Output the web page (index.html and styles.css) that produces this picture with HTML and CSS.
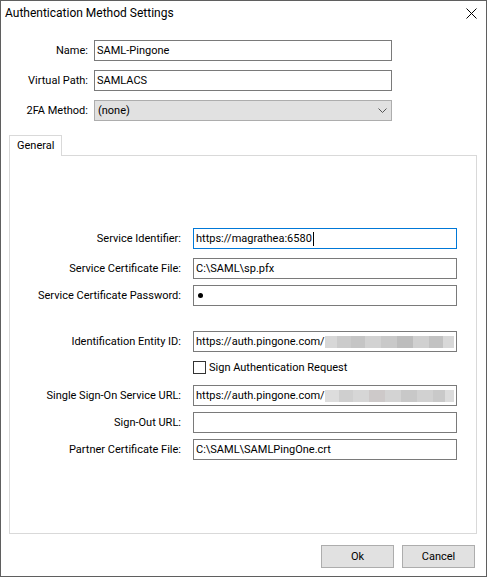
FILE: index.html
```html
<!DOCTYPE html>
<html lang="en">
<head>
    <meta charset="UTF-8">
    <meta name="viewport" content="width=device-width, initial-scale=1.0">
    <title>Authentication Method Settings</title>
    <link rel="stylesheet" href="styles.css">
</head>
<body>
    <div class="window">
        <div class="titlebar">
            <span class="title">Authentication Method Settings</span>
            <svg class="close" width="11" height="11" viewBox="0 0 11 11">
                <path d="M0.5 0.5 L10.5 10.5 M10.5 0.5 L0.5 10.5" stroke="#000" stroke-width="1" fill="none"/>
            </svg>
        </div>

        <div class="top-form">
            <label class="label">Name:</label>
            <div class="field">SAML-Pingone</div>
            <label class="label">Virtual Path:</label>
            <div class="field">SAMLACS</div>
            <label class="label">2FA Method:</label>
            <div class="field select">
                <span>(none)</span>
                <svg class="chevron" width="9" height="5" viewBox="0 0 9 5">
                    <path d="M0.5 0.5 L4.5 4.5 L8.5 0.5" stroke="#555" stroke-width="1" fill="none"/>
                </svg>
            </div>
        </div>

        <div class="tabs">
            <div class="tab">General</div>
        </div>
        <div class="panel">
            <div class="row">
                <label class="label">Service Identifier:</label>
                <div class="field focused">https://magrathea:6580<span class="caret"></span></div>
            </div>
            <div class="row gap-9">
                <label class="label">Service Certificate File:</label>
                <div class="field">C:\SAML\sp.pfx</div>
            </div>
            <div class="row">
                <label class="label">Service Certificate Password:</label>
                <div class="field"><span class="dot"></span></div>
            </div>
            <div class="row gap-25">
                <label class="label">Identification Entity ID:</label>
                <div class="field">https://auth.pingone.com/<span class="blur"></span></div>
            </div>
            <div class="row check-row">
                <span class="label"></span>
                <label class="check"><span class="box"></span>Sign Authentication Request</label>
            </div>
            <div class="row gap-11">
                <label class="label">Single Sign-On Service URL:</label>
                <div class="field">https://auth.pingone.com/<span class="blur alt"></span></div>
            </div>
            <div class="row">
                <label class="label">Sign-Out URL:</label>
                <div class="field"></div>
            </div>
            <div class="row">
                <label class="label">Partner Certificate File:</label>
                <div class="field">C:\SAML\SAMLPingOne.crt</div>
            </div>
        </div>

        <div class="actions">
            <button class="button">Ok</button>
            <button class="button">Cancel</button>
        </div>
    </div>
</body>
</html>
```

FILE: styles.css
```css
body {
    margin: 0;
    background-color: #fff;
    font-family: Roboto, "Noto Sans", sans-serif;
    font-size: 11px;
    color: #000;
}
.window {
    width: 487px;
    height: 577px;
    box-sizing: border-box;
    border: 1px solid #5f5f5f;
    background-color: #fff;
    display: flex;
    flex-direction: column;
}
.titlebar {
    height: 24px;
    display: flex;
    align-items: center;
    justify-content: space-between;
    padding: 0 9px 0 4px;
}
.title {
    font-size: 12px;
}
.close {
    display: block;
}
.top-form {
    display: grid;
    grid-template-columns: 87px 298px;
    grid-auto-rows: 21px;
    column-gap: 6px;
    row-gap: 9px;
    margin-top: 15px;
}
.label {
    display: flex;
    align-items: center;
    justify-content: flex-end;
    white-space: nowrap;
}
.field {
    height: 21px;
    box-sizing: border-box;
    border: 1px solid #7a7a7a;
    padding: 0 2px;
    display: flex;
    align-items: center;
    white-space: nowrap;
    overflow: hidden;
}
.field.select {
    background-color: #e1e1e1;
    border-color: #adadad;
    padding: 0 4px 0 3px;
    justify-content: space-between;
}
.field.focused {
    border-color: #0078d7;
}
.caret {
    display: inline-block;
    width: 1px;
    height: 14px;
    background-color: #000;
    margin-left: 1px;
}
.dot {
    display: inline-block;
    width: 5px;
    height: 5px;
    border-radius: 50%;
    background-color: #000;
    margin-left: 2px;
}
.blur {
    display: inline-block;
    flex: 1;
    height: 12px;
    background: linear-gradient(90deg,
        #d7d7d7 0, #d7d7d7 12px, #cbcbcb 12px, #cbcbcb 26px,
        #c5c5c5 26px, #c5c5c5 40px, #d2d2d2 40px, #d2d2d2 56px,
        #c9c9c9 56px, #c9c9c9 72px, #bdbdbd 72px, #bdbdbd 88px,
        #d0d0d0 88px, #d0d0d0 104px, #c2c2c2 104px, #c2c2c2 118px,
        #d8d8d8 118px);
}
.blur.alt {
    background: linear-gradient(90deg,
        #dddddd 0, #dddddd 14px, #cfcfcf 14px, #cfcfcf 28px,
        #d6d6d6 28px, #d6d6d6 44px, #cdc9c9 44px, #cdc9c9 60px,
        #d3d3d3 60px, #d3d3d3 76px, #c8c8c8 76px, #c8c8c8 92px,
        #d1d1d1 92px, #d1d1d1 108px, #c9c9c9 108px, #c9c9c9 120px,
        #dcdcdc 120px);
}
.tabs {
    display: flex;
    margin: 14px 0 0 8px;
    height: 20px;
    position: relative;
    z-index: 1;
}
.tab {
    width: 53px;
    height: 21px;
    box-sizing: border-box;
    border: 1px solid #d9d9d9;
    border-bottom: none;
    background-color: #fff;
    padding: 3px 0 0 7px;
}
.panel {
    margin-left: 8px;
    width: 468px;
    height: 379px;
    box-sizing: border-box;
    border: 1px solid #d9d9d9;
    padding-top: 72px;
    display: flex;
    flex-direction: column;
    gap: 6px;
}
.row {
    display: grid;
    grid-template-columns: 171px 264px;
    column-gap: 12px;
    height: 21px;
}
.row.gap-9 {
    margin-top: 3px;
}
.row.gap-25 {
    margin-top: 19px;
}
.row.gap-11 {
    margin-top: 5px;
}
.row.check-row {
    height: 13px;
    margin-top: 3px;
}
.check {
    display: flex;
    align-items: center;
    white-space: nowrap;
    height: 13px;
}
.box {
    width: 13px;
    height: 13px;
    box-sizing: border-box;
    border: 1px solid #333;
    margin-right: 3px;
    flex: none;
}
.actions {
    display: flex;
    justify-content: flex-end;
    gap: 8px;
    margin-top: 11px;
    padding-right: 11px;
}
.button {
    width: 73px;
    height: 23px;
    box-sizing: border-box;
    background-color: #e1e1e1;
    border: 1px solid #adadad;
    font-family: inherit;
    font-size: 11px;
    color: #000;
    padding: 0;
}
```
